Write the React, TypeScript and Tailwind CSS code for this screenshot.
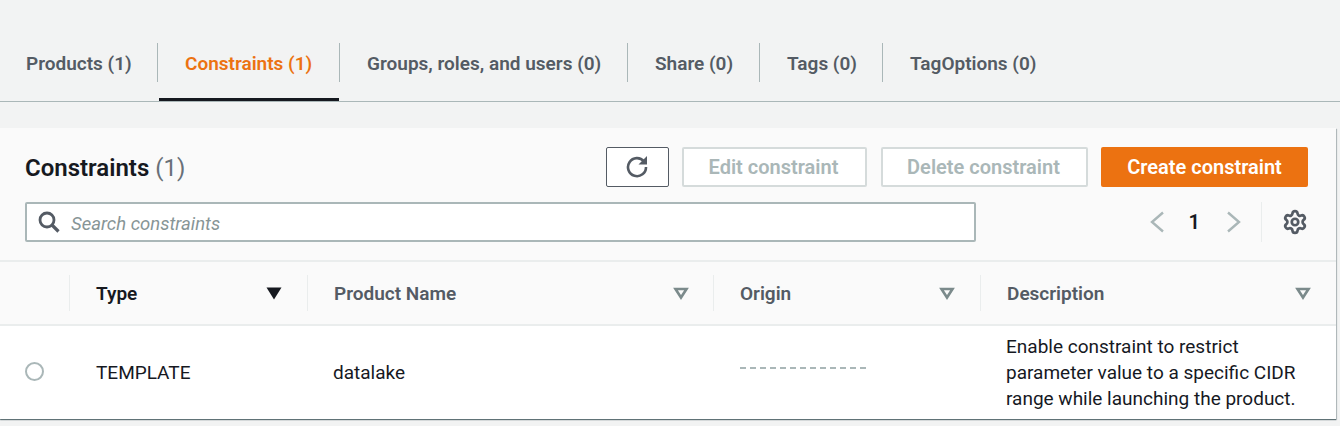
import { Settings } from "lucide-react";

const TABS = [
  { label: "Products (1)", width: "w-[158px]", pad: "pl-[26px]" },
  { label: "Constraints (1)", width: "w-[182px]", pad: "pl-[27px]", active: true },
  { label: "Groups, roles, and users (0)", width: "w-[288px]", pad: "pl-[27px]" },
  { label: "Share (0)", width: "w-[132px]", pad: "pl-[27px]" },
  { label: "Tags (0)", width: "w-[123px]", pad: "pl-[27px]" },
  { label: "TagOptions (0)", width: "w-[200px]", pad: "pl-[27px]", last: true },
];

function Caret({ solid = false }: { solid?: boolean }) {
  return (
    <svg width="16" height="13" viewBox="0 0 16 13" className="shrink-0">
      {solid ? (
        <path d="M0.5 0.5H15.5L8 12.5Z" fill="#16191f" />
      ) : (
        <path d="M2.5 2H13.5L8 10.5Z" fill="none" stroke="#7b8a8b" strokeWidth="2.6" />
      )}
    </svg>
  );
}

function HeaderCell({ label, active, caretRight }: { label: string; active?: boolean; caretRight: string }) {
  return (
    <div className={`flex h-[36px] items-center justify-between border-l border-[#eaeded] pl-[26px] ${caretRight}`}>
      <span className={`mt-[2px] text-[19px] font-semibold ${active ? "text-[#16191f]" : "text-[#545b64]"}`}>{label}</span>
      <Caret solid={active} />
    </div>
  );
}

function Chevron({ right = false }: { right?: boolean }) {
  return (
    <svg width="15" height="22" viewBox="0 0 15 22" fill="none" stroke="#aab7b8" strokeWidth="2.4">
      <path d={right ? "M2 1.5L13 11L2 20.5" : "M13 1.5L2 11L13 20.5"} />
    </svg>
  );
}

export default function App() {
  return (
    <div className="h-[426px] w-[1340px] overflow-hidden bg-[#f2f3f3] font-['Roboto',sans-serif]">
      {/* Tabs */}
      <div className="flex h-[102px] items-end border-b border-[#aab7b8] pr-[4px]">
        <div className="flex h-[39px] mb-[19px] items-center">
          {TABS.map((t) => (
            <div
              key={t.label}
              className={`relative flex h-[39px] items-center ${t.width} ${t.pad} ${t.last ? "" : "border-r border-[#aab7b8]"}`}
            >
              <span className={`mt-[3px] text-[19px] font-semibold whitespace-nowrap ${t.active ? "text-[#ec7211]" : "text-[#545b64]"}`}>
                {t.label}
              </span>
              {t.active && <div className="absolute left-[1px] right-[0px] top-[55px] h-[3px] bg-[#16191f]" />}
            </div>
          ))}
        </div>
      </div>

      {/* Card */}
      <div className="mt-[26px] h-[291px] w-[1336px] bg-white shadow-[0_1px_1px_0_rgba(0,28,36,0.5),1px_1px_1px_0_rgba(0,28,36,0.2)]">
        <div className="h-[134px] border-b-2 border-[#eaeded] bg-[#fafafa] pl-[25px] pr-[28px] pt-[19px]">
          <div className="flex h-[40px] items-center justify-between">
            <h2 className="mt-[2px] text-[24px] font-semibold text-[#16191f]">
              Constraints <span className="font-normal text-[#687078]">(1)</span>
            </h2>
            <div className="flex items-center">
              <button className="flex h-[40px] w-[63px] items-center justify-center rounded-[2px] border border-[#545b64] bg-white pr-[2px] pb-[2px]">
                <svg width="24" height="24" viewBox="0 0 24 24" fill="none">
                  <path d="M19 7.5A9 9 0 1 0 21 13" stroke="#545b64" strokeWidth="2.6" />
                  <path d="M22 2V10.5H13.5Z" fill="#545b64" />
                </svg>
              </button>
              <button className="ml-[13px] h-[40px] w-[185px] rounded-[2px] border-2 border-[#d5dbdb] bg-white pr-[2px] text-[20px] font-semibold text-[#aab7b8]">
                Edit constraint
              </button>
              <button className="ml-[14px] h-[40px] w-[207px] rounded-[2px] border-2 border-[#d5dbdb] bg-white pr-[2px] text-[20px] font-semibold text-[#aab7b8]">
                Delete constraint
              </button>
              <button className="ml-[13px] h-[40px] w-[207px] rounded-[2px] bg-[#ec7211] text-[20px] font-semibold text-white">
                Create constraint
              </button>
            </div>
          </div>
          <div className="mt-[15px] flex items-center">
            <div className="flex h-[40px] w-[951px] items-center rounded-[2px] border-2 border-[#aab7b8] bg-white pl-[11px]">
              <svg width="22" height="22" viewBox="0 0 22 22" fill="none" stroke="#545b64" strokeWidth="2.8">
                <circle cx="9" cy="9" r="7" />
                <path d="M14 14L20.5 20.5" strokeWidth="3.2" />
              </svg>
              <span className="ml-[11px] mt-[5px] text-[18.5px] italic text-[#879596]">Search constraints</span>
            </div>
            <div className="ml-auto flex h-[40px] items-center">
              <Chevron />
              <span className="ml-[24px] mr-[26px] text-[20px] font-semibold text-[#16191f]">1</span>
              <Chevron right />
              <div className="ml-[20px] h-[40px] border-l border-[#eaeded]" />
              <Settings size={26} strokeWidth={2.5} className="ml-[20px] text-[#545b64]" />
            </div>
          </div>
        </div>

        {/* Table head */}
        <div className="grid h-[64px] grid-cols-[69px_238px_406px_267px_1fr] items-center border-b-2 border-[#eaeded] bg-[#fafafa]">
          <div />
          <HeaderCell label="Type" active caretRight="pr-[25px]" />
          <HeaderCell label="Product Name" caretRight="pr-[24px]" />
          <HeaderCell label="Origin" caretRight="pr-[25px]" />
          <HeaderCell label="Description" caretRight="pr-[25px]" />
        </div>

        {/* Row */}
        <div className="grid h-[91px] grid-cols-[70px_237px_406px_267px_1fr] items-center text-[19px] text-[#16191f]">
          <div className="pl-[25px]">
            <div className="h-[19px] w-[19px] rounded-full border-2 border-[#aab7b8] bg-white" />
          </div>
          <div className="mt-[4px] pl-[26px]">TEMPLATE</div>
          <div className="mt-[4px] pl-[26px]">datalake</div>
          <div className="pl-[27px]">
            <div className="mb-[8px] w-[126px] border-t-2 border-dashed border-[#aab7b8]" />
          </div>
          <div className="mt-[2px] pl-[26px] leading-[26px] whitespace-nowrap">
            Enable constraint to restrict
            <br />
            parameter value to a specific CIDR
            <br />
            range while launching the product.
          </div>
        </div>
      </div>
    </div>
  );
}
